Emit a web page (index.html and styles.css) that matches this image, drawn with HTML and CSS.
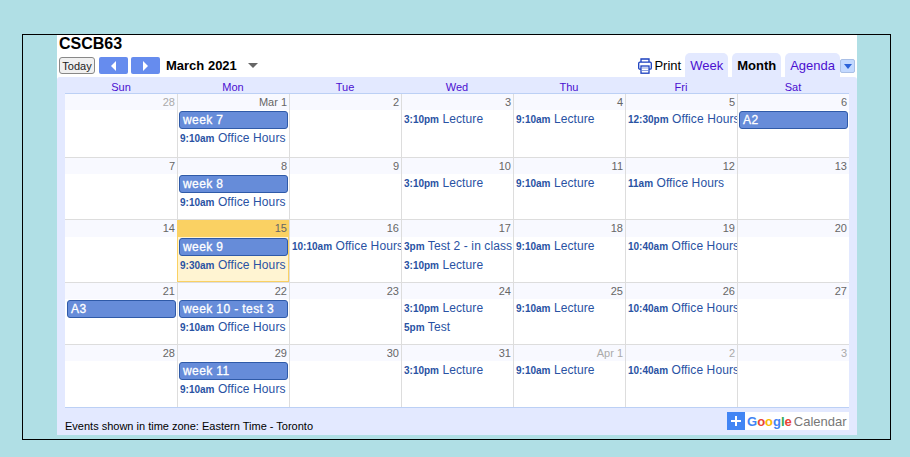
FILE: index.html
```html
<!DOCTYPE html>
<html>
<head>
	<title>CSCB63</title>
	<link rel="stylesheet" href="styles.css">
</head>
<body>
	<div class="frame">
		<div class="widget">
			<div class="title">CSCB63</div>
			<div class="toolbar">
				<button class="today-btn">Today</button>
				<div class="nav-btn"><svg width="7" height="12" viewBox="0 0 7 12"><path d="M6 1v10L1 6z" fill="#fff"/></svg></div>
				<div class="nav-btn"><svg width="7" height="12" viewBox="0 0 7 12"><path d="M1 1v10l5-5z" fill="#fff"/></svg></div>
				<div class="date-label">March 2021</div>
				<div class="date-arrow"></div>
				<div class="spacer"></div>
				<div class="print">
					<svg width="14" height="16" viewBox="0 0 14 16" fill="none" stroke="#1a3fbf" stroke-width="1.3">
						<path d="M3 4V1h8v3"/>
						<rect x="0.7" y="4.2" width="12.6" height="7" rx="1.2"/>
						<rect x="3" y="8" width="8" height="7.2" fill="#fff"/>
						<path d="M4.5 10h1M6.5 10h1M8.5 10h1M4.5 12.5h1M6.5 12.5h1M8.5 12.5h1" stroke-width="1"/>
					</svg>
					<span>Print</span>
				</div>
				<div class="tab">Week</div>
				<div class="tab tab-on">Month</div>
				<div class="tab tab-last">Agenda</div>
				<div class="tab-menu"><div class="tab-menu-arrow"></div></div>
			</div>
			<div class="panel">
				<div class="weekdays">
					<div>Sun</div><div>Mon</div><div>Tue</div><div>Wed</div><div>Thu</div><div>Fri</div><div>Sat</div>
				</div>
				<div class="grid">
					<div class="week">
						<div class="day"><div class="num off">28</div></div>
						<div class="day"><div class="num">Mar 1</div><div class="bar">week 7</div><div class="ev"><b>9:10am</b> Office Hours</div></div>
						<div class="day"><div class="num">2</div></div>
						<div class="day"><div class="num">3</div><div class="ev"><b>3:10pm</b> Lecture</div></div>
						<div class="day"><div class="num">4</div><div class="ev"><b>9:10am</b> Lecture</div></div>
						<div class="day"><div class="num">5</div><div class="ev"><b>12:30pm</b> Office Hours</div></div>
						<div class="day"><div class="num">6</div><div class="bar">A2</div></div>
					</div>
					<div class="week">
						<div class="day"><div class="num">7</div></div>
						<div class="day"><div class="num">8</div><div class="bar">week 8</div><div class="ev"><b>9:10am</b> Office Hours</div></div>
						<div class="day"><div class="num">9</div></div>
						<div class="day"><div class="num">10</div><div class="ev"><b>3:10pm</b> Lecture</div></div>
						<div class="day"><div class="num">11</div><div class="ev"><b>9:10am</b> Lecture</div></div>
						<div class="day"><div class="num">12</div><div class="ev"><b>11am</b> Office Hours</div></div>
						<div class="day"><div class="num">13</div></div>
					</div>
					<div class="week week-tall">
						<div class="day"><div class="num">14</div></div>
						<div class="day today"><div class="num">15</div><div class="bar">week 9</div><div class="ev"><b>9:30am</b> Office Hours</div></div>
						<div class="day"><div class="num">16</div><div class="ev"><b>10:10am</b> Office Hours</div></div>
						<div class="day"><div class="num">17</div><div class="ev"><b>3pm</b> Test 2 - in class</div><div class="ev"><b>3:10pm</b> Lecture</div></div>
						<div class="day"><div class="num">18</div><div class="ev"><b>9:10am</b> Lecture</div></div>
						<div class="day"><div class="num">19</div><div class="ev"><b>10:40am</b> Office Hours</div></div>
						<div class="day"><div class="num">20</div></div>
					</div>
					<div class="week">
						<div class="day"><div class="num">21</div><div class="bar">A3</div></div>
						<div class="day"><div class="num">22</div><div class="bar">week 10 - test 3</div><div class="ev"><b>9:10am</b> Office Hours</div></div>
						<div class="day"><div class="num">23</div></div>
						<div class="day"><div class="num">24</div><div class="ev"><b>3:10pm</b> Lecture</div><div class="ev"><b>5pm</b> Test</div></div>
						<div class="day"><div class="num">25</div><div class="ev"><b>9:10am</b> Lecture</div></div>
						<div class="day"><div class="num">26</div><div class="ev"><b>10:40am</b> Office Hours</div></div>
						<div class="day"><div class="num">27</div></div>
					</div>
					<div class="week">
						<div class="day"><div class="num">28</div></div>
						<div class="day"><div class="num">29</div><div class="bar">week 11</div><div class="ev"><b>9:10am</b> Office Hours</div></div>
						<div class="day"><div class="num">30</div></div>
						<div class="day"><div class="num">31</div><div class="ev"><b>3:10pm</b> Lecture</div></div>
						<div class="day"><div class="num off">Apr 1</div><div class="ev"><b>9:10am</b> Lecture</div></div>
						<div class="day"><div class="num off">2</div><div class="ev"><b>10:40am</b> Office Hours</div></div>
						<div class="day"><div class="num off">3</div></div>
					</div>
				</div>
				<div class="footer">
					<div class="zone">Events shown in time zone: Eastern Time - Toronto</div>
					<div class="gcal">
						<div class="gcal-plus"><svg width="12" height="12" viewBox="0 0 12 12"><path d="M6 1v10M1 6h10" stroke="#fff" stroke-width="2"/></svg></div>
						<div class="gcal-text"><span class="g-word"><span class="g-b">G</span><span class="g-r">o</span><span class="g-y">o</span><span class="g-b">g</span><span class="g-g">l</span><span class="g-r">e</span></span><span class="g-cal">Calendar</span></div>
					</div>
				</div>
			</div>
		</div>
	</div>
</body>
</html>
```

FILE: styles.css
```css
body {
	margin: 0;
	height: 457px;
	overflow: hidden;
	background: #b0dfe5;
	font-family: "Liberation Sans", Arial, sans-serif;
}

.frame {
	box-sizing: border-box;
	width: 869px;
	height: 406px;
	margin: 34px 0 0 22px;
	padding-left: 34px;
	border: 1px solid #000;
}

.widget {
	display: flex;
	flex-direction: column;
	width: 800px;
	height: 400px;
	background: #fff;
}

.title {
	height: 18px;
	padding-left: 2px;
	font-size: 16px;
	font-weight: bold;
	line-height: 18px;
}

.toolbar {
	display: flex;
	align-items: flex-start;
	height: 24px;
}

.today-btn {
	box-sizing: border-box;
	width: 36px;
	height: 17px;
	margin: 4px 4px 0 2px;
	padding: 0;
	border: 1px solid #888;
	border-radius: 3px;
	background: #f0f0f0;
	color: #222;
	font-family: inherit;
	font-size: 11px;
}

.nav-btn {
	display: flex;
	align-items: center;
	justify-content: center;
	width: 29px;
	height: 17px;
	margin: 4px 3px 0 0;
	border-radius: 2px;
	background: #668cee;
}

.date-label {
	margin: 4px 0 0 3px;
	font-size: 13px;
	font-weight: bold;
	line-height: 17px;
}

.date-arrow {
	width: 0;
	height: 0;
	margin: 10px 0 0 11px;
	border-top: 5px solid #666;
	border-left: 5px solid transparent;
	border-right: 5px solid transparent;
}

.spacer {
	flex: 1;
}

.print {
	display: flex;
	align-items: center;
	gap: 2px;
	margin: 5px 4px 0 0;
	font-size: 13px;
	line-height: 16px;
}

.tab {
	height: 24px;
	margin-right: 4px;
	padding: 0 5px;
	border-radius: 5px 5px 0 0;
	background: #e3e9ff;
	color: #4b0fd0;
	font-size: 13px;
	line-height: 26px;
}

.tab-on {
	color: #000;
	font-weight: bold;
}

.tab-last {
	margin-right: 0;
}

.tab-menu {
	box-sizing: border-box;
	display: flex;
	align-items: center;
	justify-content: center;
	width: 15px;
	height: 14px;
	margin: 6px 2px 0 0;
	border: 1px solid #a9bfe6;
	border-radius: 2px;
	background: #c3d9ff;
}

.tab-menu-arrow {
	width: 0;
	height: 0;
	border-top: 5px solid #2b62d9;
	border-left: 4px solid transparent;
	border-right: 4px solid transparent;
}

.panel {
	flex: 1;
	display: flex;
	flex-direction: column;
	min-height: 0;
	padding: 0 8px;
	border-radius: 3px 3px 0 0;
	background: #e3e9ff;
}

.weekdays {
	display: grid;
	grid-template-columns: repeat(7, 112px);
	height: 14px;
	padding-top: 2px;
	border-bottom: 1px solid #bcd0f5;
	color: #4b0fd0;
	font-size: 11px;
	line-height: 16px;
	text-align: center;
}

.grid {
	display: grid;
	grid-template-rows: 63px 62px 63px 62px 63px;
	background: #fff;
	border-bottom: 1px solid #bcd0f5;
}

.week {
	display: grid;
	grid-template-columns: repeat(7, 112px);
	overflow: hidden;
	border-top: 1px solid #ddd;
}

.week:first-child {
	border-top: 0;
}

.day {
	box-sizing: border-box;
	overflow: hidden;
	border-left: 1px solid #ddd;
}

.day:first-child {
	border-left: 0;
}

.day:first-child .bar {
	margin-left: 2px;
}

.num {
	height: 16px;
	padding-right: 2px;
	background: #f8f9ff;
	color: #666;
	font-size: 11px;
	line-height: 16px;
	text-align: right;
}

.week-tall .num {
	height: 17px;
}

.num.off {
	color: #aaa;
}

.day.today {
	border-left: 1px solid #fad163;
	border-right: 1px solid #fad163;
	border-bottom: 1px solid #fad163;
	background: #fff4d2;
}

.day.today .num {
	padding-right: 1px;
	background: #fad163;
}

.day.today .bar {
	margin-right: 0;
}

.bar {
	box-sizing: border-box;
	height: 18px;
	margin: 1px 1px 0 1px;
	padding-left: 3px;
	overflow: hidden;
	border: 1px solid #2f5aa8;
	border-radius: 3px;
	background: #668cd9;
	color: #fff;
	font-size: 12px;
	letter-spacing: 0.4px;
	line-height: 16px;
	white-space: nowrap;
	-webkit-text-stroke: 0.3px #fff;
}

.ev {
	height: 19px;
	padding-left: 2px;
	overflow: hidden;
	color: #2952a3;
	font-size: 12px;
	letter-spacing: 0.1px;
	line-height: 19px;
	white-space: nowrap;
}

.ev b {
	font-size: 10px;
	letter-spacing: 0;
}

.footer {
	flex: 1;
	display: flex;
	align-items: flex-end;
	justify-content: space-between;
	padding-bottom: 2px;
}

.zone {
	font-size: 11px;
	line-height: 13px;
}

.gcal {
	display: flex;
	height: 18px;
	margin-bottom: 3px;
	background: #fff;
}

.gcal-plus {
	display: flex;
	align-items: center;
	justify-content: center;
	width: 18px;
	background: #4285f4;
}

.gcal-text {
	box-sizing: border-box;
	width: 104px;
	padding-left: 2px;
	line-height: 18px;
	white-space: nowrap;
}

.g-word {
	font-size: 13px;
	font-weight: bold;
}

.g-b { color: #4285f4; }
.g-r { color: #ea4335; }
.g-y { color: #fbbc05; }
.g-g { color: #34a853; }

.g-cal {
	margin-left: 2px;
	color: #777;
	font-size: 13px;
}
```
